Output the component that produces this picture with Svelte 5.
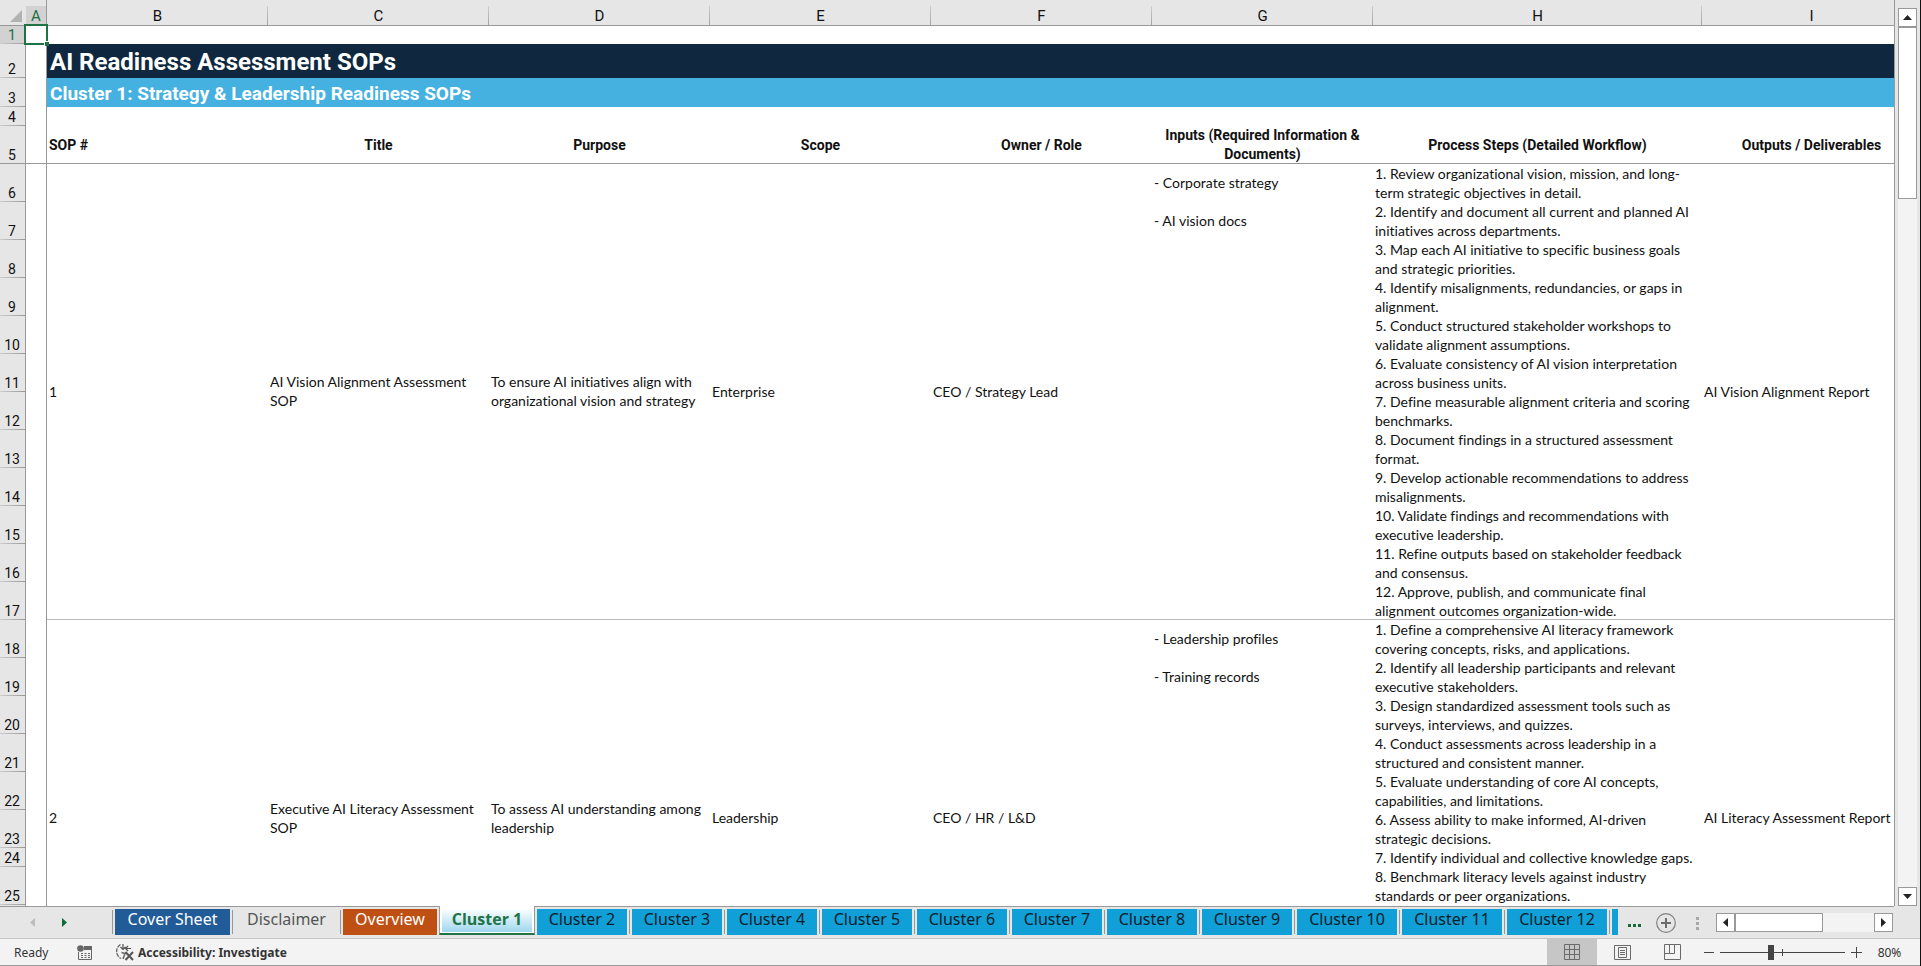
<script>
  const columns = ['A', 'B', 'C', 'D', 'E', 'F', 'G', 'H', 'I'];
  const headings = ['Title', 'Purpose', 'Scope', 'Owner / Role', 'Inputs (Required Information & Documents)', 'Process Steps (Detailed Workflow)', 'Outputs / Deliverables'];

  const sops = [
    {
      id: 1,
      title: ['AI Vision Alignment Assessment', 'SOP'],
      purpose: ['To ensure AI initiatives align with', 'organizational vision and strategy'],
      scope: 'Enterprise',
      owner: 'CEO / Strategy Lead',
      inputs: ['- Corporate strategy', '- AI vision docs'],
      steps: [
        '1. Review organizational vision, mission, and long-', 'term strategic objectives in detail.',
        '2. Identify and document all current and planned AI', 'initiatives across departments.',
        '3. Map each AI initiative to specific business goals', 'and strategic priorities.',
        '4. Identify misalignments, redundancies, or gaps in', 'alignment.',
        '5. Conduct structured stakeholder workshops to', 'validate alignment assumptions.',
        '6. Evaluate consistency of AI vision interpretation', 'across business units.',
        '7. Define measurable alignment criteria and scoring', 'benchmarks.',
        '8. Document findings in a structured assessment', 'format.',
        '9. Develop actionable recommendations to address', 'misalignments.',
        '10. Validate findings and recommendations with', 'executive leadership.',
        '11. Refine outputs based on stakeholder feedback', 'and consensus.',
        '12. Approve, publish, and communicate final', 'alignment outcomes organization-wide.'
      ],
      output: 'AI Vision Alignment Report',
      rows: [6, 7, 8, 9, 10, 11, 12, 13, 14, 15, 16, 17]
    },
    {
      id: 2,
      title: ['Executive AI Literacy Assessment', 'SOP'],
      purpose: ['To assess AI understanding among', 'leadership'],
      scope: 'Leadership',
      owner: 'CEO / HR / L&D',
      inputs: ['- Leadership profiles', '- Training records'],
      steps: [
        '1. Define a comprehensive AI literacy framework', 'covering concepts, risks, and applications.',
        '2. Identify all leadership participants and relevant', 'executive stakeholders.',
        '3. Design standardized assessment tools such as', 'surveys, interviews, and quizzes.',
        '4. Conduct assessments across leadership in a', 'structured and consistent manner.',
        '5. Evaluate understanding of core AI concepts,', 'capabilities, and limitations.',
        '6. Assess ability to make informed, AI-driven', 'strategic decisions.',
        '7. Identify individual and collective knowledge gaps.',
        '8. Benchmark literacy levels against industry', 'standards or peer organizations.'
      ],
      output: 'AI Literacy Assessment Report',
      rows: [18, 19, 20, 21, 22, 23, 24, 25, '']
    }
  ];

  const clusters = Array.from({ length: 11 }, (_, i) => i + 2);
  let zoom = $state(40);
</script>

<div class="app">
  <main class="workspace">
    <div class="sheet">
      <table>
        <colgroup>
          <col class="w-head" /><col class="w-a" />
          <col class="w-std" /><col class="w-std" /><col class="w-std" /><col class="w-std" /><col class="w-std" /><col class="w-std" />
          <col class="w-steps" /><col />
        </colgroup>
        <thead>
          <tr class="letters">
            <th class="corner"><svg width="12" height="12" viewBox="0 0 12 12"><path d="M12 0V12H0Z" fill="#b2b2b2" /></svg></th>
            {#each columns as c}
              <th scope="col" class:picked={c === 'A'}>{c}</th>
            {/each}
          </tr>
        </thead>
        <tbody>
          <tr class="h18">
            <th scope="row" class="num picked">1</th>
            <td class="cell-a selected"><span class="cursor"></span></td>
            <td colspan="8"></td>
          </tr>
          <tr class="h34">
            <th scope="row" class="num">2</th>
            <td class="cell-a"></td>
            <td colspan="8" class="banner title">AI Readiness Assessment SOPs</td>
          </tr>
          <tr class="h29">
            <th scope="row" class="num">3</th>
            <td class="cell-a"></td>
            <td colspan="8" class="banner subtitle">Cluster 1: Strategy &amp; Leadership Readiness SOPs</td>
          </tr>
          <tr class="h19">
            <th scope="row" class="num">4</th>
            <td class="cell-a"></td>
            <td colspan="8"></td>
          </tr>
          <tr class="h38 heads">
            <th scope="row" class="num">5</th>
            <td class="cell-a"></td>
            <th class="left">SOP #</th>
            {#each headings as h}<th>{h}</th>{/each}
          </tr>
          {#each sops as s}
            {#each s.rows as r, i}
              <tr class={r === 24 ? 'h19' : r === '' ? 'rest' : 'h38'}>
                <th scope="row" class="num">{r}</th>
                <td class="cell-a"></td>
                {#if i === 0}
                  <td class="data" rowspan={s.rows.length}>{s.id}</td>
                  <td class="data" rowspan={s.rows.length}>{#each s.title as l}<div>{l}</div>{/each}</td>
                  <td class="data" rowspan={s.rows.length}>{#each s.purpose as l}<div>{l}</div>{/each}</td>
                  <td class="data" rowspan={s.rows.length}>{s.scope}</td>
                  <td class="data" rowspan={s.rows.length}>{s.owner}</td>
                  <td class="data top inputs" rowspan={s.rows.length}>{#each s.inputs as l}<div>{l}</div>{/each}</td>
                  <td class="data top" rowspan={s.rows.length}>{#each s.steps as l}<div>{l}</div>{/each}</td>
                  <td class="data" rowspan={s.rows.length}>{s.output}</td>
                {/if}
              </tr>
            {/each}
          {/each}
        </tbody>
      </table>
    </div>
    <div class="vscroll">
      <button class="arrow" aria-label="Scroll up"><svg width="9" height="5" viewBox="0 0 9 5"><path d="M0 5 4.500 0 9 5Z" fill="#222" /></svg></button>
      <div class="vthumb"></div>
      <div class="vtrack"></div>
      <button class="arrow" aria-label="Scroll down"><svg width="9" height="5" viewBox="0 0 9 5"><path d="M0 0H9L4.500 5Z" fill="#222" /></svg></button>
    </div>
  </main>

  <nav class="tabbar">
    <div class="tabnav">
      <button aria-label="Previous sheets"><svg width="5" height="9" viewBox="0 0 5 9"><path d="M5 0V9L0 4.500Z" fill="#bdbdbd" /></svg></button>
      <button aria-label="Next sheets"><svg width="5" height="9" viewBox="0 0 5 9"><path d="M0 0V9L5 4.500Z" fill="#0e6b3a" /></svg></button>
    </div>
    <div class="slot sep cover"><button class="tab navy">Cover Sheet</button></div>
    <div class="slot sep disc"><button class="tab plain">Disclaimer</button></div>
    <div class="slot sep over"><button class="tab orange">Overview</button></div>
    <div class="active"><button class="tab current">Cluster 1</button></div>
    {#each clusters as n}
      <div class="slot" class:first={n === 2} class:sep={n > 2} class:wide={n > 9}><button class="tab sky">Cluster {n}</button></div>
    {/each}
    <div class="slot sep sliver"><div class="tab sky"></div></div>
    <button class="more" aria-label="More sheets"><svg width="13" height="3" viewBox="0 0 13 3"><path d="M0 0h3v3H0ZM5 0h3v3H5ZM10 0h3v3h-3Z" fill="#17693c" /></svg></button>
    <button class="add" aria-label="New sheet">
      <svg width="20" height="20" viewBox="0 0 20 20"><circle cx="10" cy="10" r="9.300" fill="none" stroke="#808080" stroke-width="1.200" /><path d="M10 5V15M5 10H15" stroke="#6c6c6c" stroke-width="2" /></svg>
    </button>
    <div class="grow"></div>
    <svg class="grip" width="3" height="13" viewBox="0 0 3 13"><path d="M0 0h3v3H0ZM0 5h3v3H0ZM0 10h3v3H0Z" fill="#a8a8a8" /></svg>
    <div class="hscroll">
      <button class="arrow" aria-label="Scroll left"><svg width="5" height="9" viewBox="0 0 5 9"><path d="M5 0V9L0 4.500Z" fill="#222" /></svg></button>
      <div class="hthumb"></div>
      <div class="htrack"></div>
      <button class="arrow" aria-label="Scroll right"><svg width="5" height="9" viewBox="0 0 5 9"><path d="M0 0V9L5 4.500Z" fill="#222" /></svg></button>
    </div>
  </nav>

  <footer class="status">
    <span class="ready">Ready</span>
    <button class="macro" aria-label="Record macro">
      <svg width="15" height="15" viewBox="0 0 15 15"><path d="M1.500 7V14.500H14.500V2.500H7" fill="none" stroke="#666" /><path d="M7 1h8v4H7Z" fill="#666" /><circle cx="3.500" cy="3.500" r="3.300" fill="#666" /><path d="M4 8.500H6M7.500 8.500H9.500M11 8.500H13M4 10.500H6M7.500 10.500H9.500M11 10.500H13M4 12.500H6M7.500 12.500H9.500M11 12.500H13" stroke="#666" /></svg>
    </button>
    <button class="access">
      <svg width="20" height="18" viewBox="0 0 20 18"><path d="M5.500 1.500A8 8 0 0 0 6 15.500" fill="none" stroke="#666" stroke-width="1.300" stroke-dasharray="4 1" /><path d="M8 1V6M5.500 4 8 6.500 10.500 4M16 5.500H11M13 3 10.500 5.500 13 8" fill="none" stroke="#555" stroke-width="1.200" /><path d="M6.500 9.500 10 10.500 8 16" fill="none" stroke="#666" stroke-width="1.500" /><path d="M10.500 9 18 17M18 9 10.500 17" stroke="#555" stroke-width="2" /></svg>
      Accessibility: Investigate
    </button>
    <div class="grow"></div>
    <button class="view on" aria-label="Normal view"><svg width="16" height="16" viewBox="0 0 16 16"><path d="M.5.5H15.500V15.500H.5ZM5.500.5V15.500M10.500.5V15.500M.5 5.500H15.500M.5 10.500H15.500" fill="none" stroke="#6a6a6a" /></svg></button>
    <button class="view" aria-label="Page layout view"><svg width="17" height="15" viewBox="0 0 17 15"><path d="M.5.500H16.500V14.500H.5ZM4.500 2.500H12.500V12.500H4.500Z" fill="none" stroke="#6a6a6a" /><path d="M6 5.500H11M6 7.500H11M6 9.500H11" stroke="#6a6a6a" /></svg></button>
    <button class="view" aria-label="Page break preview"><svg width="17" height="16" viewBox="0 0 17 16"><path d="M.5.5H16.500V15.500H.5ZM.5 9.500H10.500V.5M5.500.5V9.500" fill="none" stroke="#6a6a6a" /></svg></button>
    <button class="step out" aria-label="Zoom out"><svg width="10" height="11" viewBox="0 0 10 11"><path d="M0 5.500H10" stroke="#444" /></svg></button>
    <div class="slider"><input type="range" min="0" max="100" bind:value={zoom} aria-label="Zoom" /></div>
    <button class="step" aria-label="Zoom in"><svg width="11" height="11" viewBox="0 0 11 11"><path d="M0 5.500H11M5.500 0V11" stroke="#444" /></svg></button>
    <button class="pct">80%</button>
  </footer>
</div>

<style>
  :global(body) { margin: 0; background: #e6e6e6; }
  .app {
    box-sizing: border-box;
    height: 100vh;
    display: flex;
    flex-direction: column;
    overflow: hidden;
    border-right: 1px solid #111;
    background: #e6e6e6;
    font-family: Roboto, "Liberation Sans", sans-serif;
    font-size: 14px;
    color: #111;
  }
  button { margin: 0; padding: 0; border: 0; background: none; font: inherit; color: inherit; display: flex; align-items: center; justify-content: center; }
  svg { display: block; flex: none; }
  .grow { flex: 1; }

  .workspace { flex: 1; min-height: 0; display: flex; }
  .sheet { flex: 1; min-width: 0; overflow: hidden; border-right: 1px solid #999; background: #fff; }
  table { width: calc(100% + 27px); table-layout: fixed; border-collapse: separate; border-spacing: 0; line-height: 19px; }
  .w-head { width: 26px; }
  .w-a { width: 21px; }
  .w-std { width: 221px; }
  .w-steps { width: 329px; }
  th, td { box-sizing: border-box; padding: 0; }

  .letters { height: 26px; }
  .letters th {
    padding-top: 7px;
    border-bottom: 1px solid #999;
    background: linear-gradient(#ccc, #999) right 6px / 1px 100% no-repeat #e6e6e6;
    font-size: 15px;
    font-weight: 400;
    line-height: 18px;
  }
  .letters .corner { background: #e6e6e6; padding-left: 10px; }
  .letters .picked { background: linear-gradient(#d2d2d2, #d2d2d2) 0 6px no-repeat #e6e6e6; border-right: 1px solid #999; color: #1f6b43; }
  .letters th:last-child { background: #e6e6e6; }
  .num {
    padding-right: 1px;
    vertical-align: bottom;
    border-right: 1px solid #999;
    background: linear-gradient(90deg, #ccc, #999) left bottom / 100% 1px no-repeat #e6e6e6;
    font-size: 14px;
    font-weight: 400;
    line-height: 18px;
  }
  .num.picked { background-color: #d2d2d2; color: #1f6b43; }
  .h18 { height: 18px; }
  .h19 { height: 19px; }
  .h29 { height: 29px; }
  .h34 { height: 34px; }
  .h38 { height: 38px; }
  .rest { height: 112px; }
  .cell-a { border-right: 1px solid #999; }
  .selected { position: relative; }
  .cursor { position: absolute; left: -2px; top: -2px; right: -2px; bottom: -1px; border: 2px solid #217346; }
  .cursor::after { content: ''; position: absolute; right: -3px; bottom: -3px; width: 4px; height: 4px; border: 1px solid #fff; border-right: 0; border-bottom: 0; background: #217346; }
  .banner { padding: 2px 0 0 3px; color: #fff; font-weight: 700; }
  .title { background: #0f2840; font-size: 24px; line-height: 32px; }
  .subtitle { background: #45b1e1; font-size: 19px; line-height: 27px; }
  .heads th:not(.num) { font-weight: 700; padding: 0 2px; }
  .heads > * { box-shadow: inset 0 -1px #999; }
  .heads .left { text-align: left; }
  .data { padding: 0 0 2px 2px; white-space: nowrap; box-shadow: inset 0 -1px #bbb; font-family: Lato, Roboto, sans-serif; font-variant-ligatures: none; }
  .data.top { vertical-align: top; padding-bottom: 0; }
  .data.inputs { line-height: 38px; }

  .vscroll { width: 19px; padding: 8px 3px 0; display: flex; flex-direction: column; }
  .arrow { box-sizing: border-box; flex: none; width: 19px; height: 19px; border: 1px solid #999; background: #fff; }
  .vthumb { box-sizing: border-box; height: 172px; border: 1px solid #999; background: #fff; }
  .vtrack { flex: 1; background: #f3f3f3; }

  .tabbar {
    flex: none;
    height: 32px;
    display: flex;
    align-items: flex-start;
    background: linear-gradient(#999, #999) left top / calc(100% - 26px) 1px no-repeat #e6e6e6;
    font-family: "Noto Sans", "Open Sans", sans-serif;
    font-size: 16px;
    line-height: 22px;
  }
  .tabnav { width: 112px; padding: 12px 0 0 30px; box-sizing: border-box; display: flex; gap: 27px; }
  .slot { box-sizing: border-box; flex: none; width: 95px; padding: 3px 2px 0; }
  .slot.sep { background: linear-gradient(#999, #999) left 4px / 1px 24px no-repeat; padding-left: 3px; }
  .slot.first { width: 94px; }
  .slot.wide { width: 105px; }
  .slot.cover { width: 120px; }
  .slot.disc { width: 108px; }
  .slot.over { width: 99px; }
  .slot.sliver { width: 9px; padding-right: 0; }
  .tab { width: 100%; height: 26px; padding-bottom: 6px; box-sizing: border-box; white-space: nowrap; }
  .navy { background: #215c98; color: #fff; }
  .plain { color: #555; }
  .orange { background: #be5014; color: #fff; }
  .sky { background: #119fd8; color: #0c2029; }
  .active { box-sizing: border-box; flex: none; width: 96px; height: 29px; padding: 0 2px 1px; border: 1px solid #999; border-top: 0; border-bottom: 2px solid #217346; background: #fff; }
  .current { background: linear-gradient(#fff 10%, #9fd7ee); color: #217346; font-family: "Open Sans", "Noto Sans", sans-serif; font-weight: 700; padding: 0; }
  .more { width: 13px; height: 32px; margin-left: 10px; padding-top: 6px; }
  .add { width: 20px; height: 32px; margin-left: 15px; padding-top: 2px; }
  .grip { margin: 11px 17px 0 0; }
  .hscroll { width: 177px; margin: 7px 27px 0 0; display: flex; }
  .hthumb { box-sizing: border-box; width: 88px; height: 19px; border: 1px solid #999; background: #fff; }
  .htrack { flex: 1; height: 19px; background: #f3f3f3; }

  .status {
    flex: none;
    box-sizing: border-box;
    height: 28px;
    border-top: 1px solid #c6c6c6;
    border-bottom: 1px solid #999;
    display: flex;
    align-items: center;
    background: #f3f3f3;
    font-family: "Noto Sans", "Open Sans", sans-serif;
    font-size: 12px;
    color: #333;
  }
  .ready { width: 63px; padding-left: 14px; }
  .access { margin-left: 23px; gap: 3px; font-weight: 700; }
  .view { width: 50px; height: 26px; }
  .view.on { background: #c6c6c6; }
  .step.out { margin-left: 7px; }
  .slider { margin: 0 6px; background: linear-gradient(#444, #444) 62px center / 1px 7px no-repeat; display: flex; }
  .slider input { appearance: none; width: 125px; height: 15px; margin: 0; background: linear-gradient(#444, #444) center / 100% 1px no-repeat; }
  .slider input::-webkit-slider-thumb { appearance: none; width: 6px; height: 15px; background: #444; }
  .pct { width: 58px; padding-right: 3px; }
</style>
